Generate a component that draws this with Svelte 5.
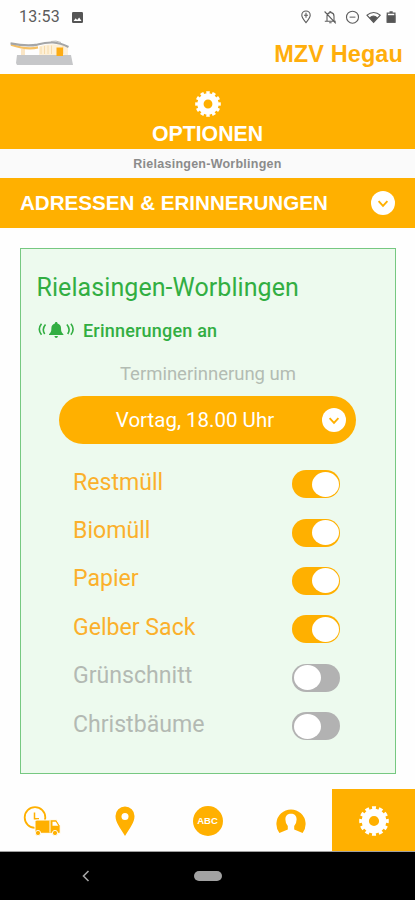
<script lang="ts">
  type Reminder = { name: string; active: boolean };

  let reminders = $state<Reminder[]>([
    { name: 'Restmüll', active: true },
    { name: 'Biomüll', active: true },
    { name: 'Papier', active: true },
    { name: 'Gelber Sack', active: true },
    { name: 'Grünschnitt', active: false },
    { name: 'Christbäume', active: false },
  ]);

  const place = 'Rielasingen-Worblingen';

  function toggle(reminder: Reminder) {
    reminder.active = !reminder.active;
  }
</script>

{#snippet gear(size: number)}
  <svg width={size} height={size} viewBox="0 0 30 30" fill="none" stroke="#fff">
    <circle cx="15" cy="15" r="8.7" stroke-width="7.2" />
    <circle cx="15" cy="15" r="13" stroke-width="3.6" pathLength="24" stroke-dasharray="1.15 0.85" stroke-dashoffset="0.575" />
  </svg>
{/snippet}

{#snippet chevron()}
  <svg class="chevron" width="24" height="24" viewBox="0 0 24 24" fill="none">
    <circle cx="12" cy="12" r="12" fill="#fff" />
    <path d="M7.600 10.200 12 14.800l4.400-4.600" stroke="#ffb000" stroke-width="1.900" />
  </svg>
{/snippet}

<div class="screen">
  <div class="statusbar">
    <span class="clock">13:53</span>
    <svg class="picture" width="11" height="11" viewBox="0 0 12 12">
      <rect width="12" height="12" rx="1.3" fill="#555" />
      <path d="M1.700 9.700 4 6.800l1.600 1.800L7.800 5.900l2.600 3.800z" fill="#fff" />
    </svg>
    <svg class="system" width="98" height="16" viewBox="0 0 98 16" fill="none" stroke="#5c5c5c" stroke-width="1.1">
      <path d="M6 13.600C3.400 10.400 1.800 8.400 1.800 6.200a4.200 4.200 0 0 1 8.400 0c0 2.200-1.600 4.200-4.200 7.400z" />
      <path d="M6 3.700v5M4 6.200h4" />
      <path d="M27 12V7.300c0-2 1.100-3.400 3-3.700V2.500c1 0 1.200.5 1.200 1.100 1.700.3 2.800 1.800 2.800 3.700V12M24.800 12.200h11M29.200 13.800h2.400M24.600 2.500l11.200 11.800" />
      <circle cx="52.500" cy="8.200" r="6" />
      <path d="M49.600 8.200h5.800" stroke-width="1.6" stroke="#999" />
      <path d="M67 6.200c4-3.700 9.400-3.700 13.200 0l-6.600 7.200z" />
      <path d="M70 8.700c2-1.800 5-1.800 7 0l-3.500 4z" fill="#555" />
      <path d="M87.300 4.200h7.600v9h-7.600zM89.500 2.800h3.200" stroke-width="1.3" />
      <path d="M87.300 6.700h7.600v6.500h-7.600z" fill="#555" />
    </svg>
  </div>

  <header>
    <svg class="logo" width="64" height="26" viewBox="0 0 64 26" fill="none">
      <path d="M7 15h54l2 10H7l-1-2z" fill="#c6c7c9" />
      <path d="M12 9v6M14 9v6" stroke="#f5cd8c" />
      <path d="M29 6.500c8-3 20-3 29 0V15H29z" fill="#fdf0d8" />
      <path d="M31 6.500V14M34.500 6V14M38 5.500V14M41.500 5.500V14M53 6V14" stroke="#f4d6a0" stroke-width=".8" />
      <path d="M46.500 7.500h6.500V16h-6.500z" fill="#fdac13" />
      <path d="M1 4.800c9 3 18 5 27 2.600" stroke="#f6c064" stroke-width="2.2" />
      <path d="M.500 3.400c10 2 18 3 27 1.200C39 1.500 47 1.300 58.500 7" stroke="#a5a6a7" stroke-width="2.1" />
      <path d="M41 1.500q5-1.300 10 1" stroke="#bbb" />
    </svg>
    <span class="brand">MZV Hegau</span>
  </header>

  <section class="hero">
    {@render gear(26)}
    <h1>OPTIONEN</h1>
  </section>
  <div class="place">{place}</div>
  <div class="bar">
    <h2>ADRESSEN &amp; ERINNERUNGEN</h2>
    {@render chevron()}
  </div>

  <main>
    <div class="card">
      <h3>{place}</h3>
      <div class="notice">
        <svg width="38" height="18" viewBox="0 0 38 18" fill="none" stroke="#32ae42" stroke-width="1.6">
          <path d="M19.200 1c1 0 1.300.6 1.300 1.400 2.300.6 3.500 2.400 3.500 4.600 0 3.500.6 4.700 2.400 6.200v.8H12v-.8c1.800-1.500 2.400-2.700 2.400-6.200 0-2.200 1.200-4 3.500-4.600 0-.8.300-1.400 1.300-1.400zM17.400 15h3.600q-.4 2-1.800 2t-1.800-2z" fill="#32ae42" stroke="none" />
          <path d="M4.500 2.800q-4.400 5.500 0 11M8.500 3.500q-4 4.800-.8 9.500M33.900 2.800q4.400 5.500 0 11M29.900 3.500q4 4.800.8 9.500" />
        </svg>
        <span>Erinnerungen an</span>
      </div>
      <p class="caption">Terminerinnerung um</p>
      <button class="time">
        <span>Vortag, 18.00 Uhr</span>
        {@render chevron()}
      </button>
      <ul>
        {#each reminders as reminder}
          <li class:active={reminder.active}>
            <span class="name">{reminder.name}</span>
            <button class="switch" role="switch" aria-checked={reminder.active} aria-label={reminder.name} onclick={() => toggle(reminder)}>
              <span class="knob"></span>
            </button>
          </li>
        {/each}
      </ul>
    </div>
  </main>

  <nav>
    <div class="tab">
      <svg width="38" height="30" viewBox="0 0 38 30" fill="none">
        <circle cx="12" cy="11.500" r="10.300" stroke="#ffb000" stroke-width="1.8" />
        <path d="M11.500 6.500v6.200H16" stroke="#ffb000" stroke-width="1.500" />
        <path d="M13.500 14h12.800v-.3h7.200l3.700 6v7.600H12V15.500z" fill="#ffb000" stroke="#fff" stroke-width="1" />
        <path d="M27 14v12.500" stroke="#fff" stroke-width="1" />
        <path d="M29.500 15.800h3.300l2.500 3.900h-5.800z" fill="#fff" />
        <g fill="#ffb000" stroke="#fff" stroke-width=".9">
          <circle cx="15" cy="27" r="2.600" />
          <circle cx="32" cy="27" r="2.600" />
        </g>
      </svg>
    </div>
    <div class="tab">
      <svg width="20" height="30" viewBox="0 0 20 30">
        <path d="M10 30C5 21.800.500 16.500.500 10a9.500 9.500 0 0 1 19 0c0 6.500-4.500 11.800-9.500 20z" fill="#ffb000" />
        <circle cx="10" cy="10.500" r="3.500" fill="#fff" />
      </svg>
    </div>
    <div class="tab"><span class="abc">ABC</span></div>
    <div class="tab">
      <svg class="person" width="30" height="26" viewBox="0 0 30 26">
        <path d="M3.400 25A14.600 14.600 0 1 1 26.600 25L18.200 21.500V18q2.400-2.500 2.400-6.500c0-4-2.400-5.700-5.600-5.700s-5.600 1.700-5.600 5.700q0 4 2.400 6.500v3.500z" fill="#ffb000" />
      </svg>
    </div>
    <div class="tab current">{@render gear(30)}</div>
  </nav>

  <footer>
    <svg width="8" height="12" viewBox="0 0 8 12" fill="none">
      <path d="M6.500 1 1.500 6l5 5" stroke="#a5a5a5" stroke-width="1.600" />
    </svg>
    <span class="home"></span>
  </footer>
</div>

<style>
  :global(body) {
    margin: 0;
    background: #fff;
  }

  .screen {
    width: 415px;
    height: 900px;
    overflow: hidden;
    display: flex;
    flex-direction: column;
    background: #fefefe;
    font-family: Roboto, sans-serif;
  }

  h1, h2, h3, p, ul {
    margin: 0;
    padding: 0;
  }

  button {
    border: 0;
    padding: 0;
    font: inherit;
  }

  svg {
    flex: none;
    display: block;
  }

  .statusbar {
    height: 34px;
    box-sizing: border-box;
    padding: 0 17px 0 19px;
    display: flex;
    align-items: center;
    color: #5c5c5c;
  }

  .clock {
    font-size: 16px;
    line-height: 34px;
    letter-spacing: 0.25px;
  }

  .picture {
    margin-left: 12px;
  }

  .system {
    margin-left: auto;
  }

  header {
    height: 40px;
    box-sizing: border-box;
    padding: 0 12px 0 10px;
    display: flex;
    justify-content: space-between;
  }

  .logo {
    margin-top: 6px;
  }

  .brand {
    font: bold 23.500px/40px 'Liberation Sans', Arial, sans-serif;
    letter-spacing: 0.1px;
    color: #ffae0c;
  }

  .hero {
    height: 75px;
    box-sizing: border-box;
    padding-top: 17px;
    display: flex;
    flex-direction: column;
    align-items: center;
    background: #ffb000;
  }

  h1 {
    margin-top: 5px;
    font: bold 21.300px/24px 'Liberation Sans', Arial, sans-serif;
    color: #fff;
  }

  .place {
    height: 29px;
    background: #fafafa;
    color: #8b8b8b;
    text-align: center;
    font: bold 12.500px/30px 'Liberation Sans', Arial, sans-serif;
    letter-spacing: 0.25px;
  }

  .bar {
    height: 50px;
    box-sizing: border-box;
    padding: 0 20px;
    display: flex;
    align-items: center;
    justify-content: space-between;
    background: #ffb000;
  }

  h2 {
    font: bold 20.600px/50px 'Liberation Sans', Arial, sans-serif;
    color: #fff;
  }

  main {
    flex: 1;
    padding: 20px 19px 0 20px;
  }

  .card {
    height: 526px;
    box-sizing: border-box;
    padding: 23px 15px 0;
    border: 1.500px solid #76c881;
    background: #edfaee;
  }

  h3 {
    padding-left: 0.5px;
    font-size: 25px;
    font-weight: 400;
    line-height: 32px;
    letter-spacing: 0.07px;
    color: #32ae42;
  }

  .notice {
    height: 20px;
    margin-top: 16px;
    padding-left: 1px;
    display: flex;
    align-items: center;
    gap: 8px;
    font-size: 18px;
    font-weight: 500;
    letter-spacing: 0.2px;
    color: #32ae42;
  }

  .caption {
    margin-top: 22px;
    text-align: center;
    font-size: 18.500px;
    line-height: 24px;
    color: #b3bcb3;
  }

  .time {
    width: 297px;
    height: 48px;
    margin: 10px 0 0 23px;
    padding-right: 10px;
    border-radius: 24px;
    display: flex;
    align-items: center;
    background: #ffb000;
    color: #fff;
    font-size: 20.500px;
  }

  .time span {
    flex: 1;
    padding-left: 9px;
  }

  ul {
    list-style: none;
    margin: 15px 40px 0 37px;
  }

  li {
    height: 48.400px;
    display: flex;
    align-items: center;
    justify-content: space-between;
    font-size: 23.100px;
    color: #b3b9b3;
  }

  li.active {
    color: #fbb02b;
  }

  .name {
    padding-bottom: 2px;
  }

  .switch {
    width: 48px;
    height: 28px;
    box-sizing: border-box;
    margin-top: 2px;
    padding: 1.500px;
    border-radius: 14px;
    display: flex;
    justify-content: flex-start;
    background: #b2b2b2;
  }

  .active .switch {
    justify-content: flex-end;
    background: #ffb000;
  }

  .knob {
    width: 27px;
    height: 25px;
    border-radius: 50%;
    background: #fff;
  }

  nav {
    height: 62px;
    display: grid;
    grid-template-columns: repeat(5, 1fr);
  }

  .tab {
    padding-top: 1px;
    display: flex;
    align-items: center;
    justify-content: center;
  }

  .current {
    background: #ffb000;
  }

  .abc {
    width: 30px;
    height: 30px;
    border-radius: 50%;
    background: #ffb000;
    color: #fff;
    text-align: center;
    font: bold 9.500px/30px 'Liberation Sans', Arial, sans-serif;
  }

  footer {
    height: 49px;
    box-sizing: border-box;
    padding-left: 82px;
    border-top: 1px solid #a0a0a0;
    display: flex;
    align-items: center;
    background: #000;
  }

  .home {
    width: 28px;
    height: 10px;
    margin-left: 104px;
    border-radius: 5px;
    background: #a2a2a2;
  }
</style>
